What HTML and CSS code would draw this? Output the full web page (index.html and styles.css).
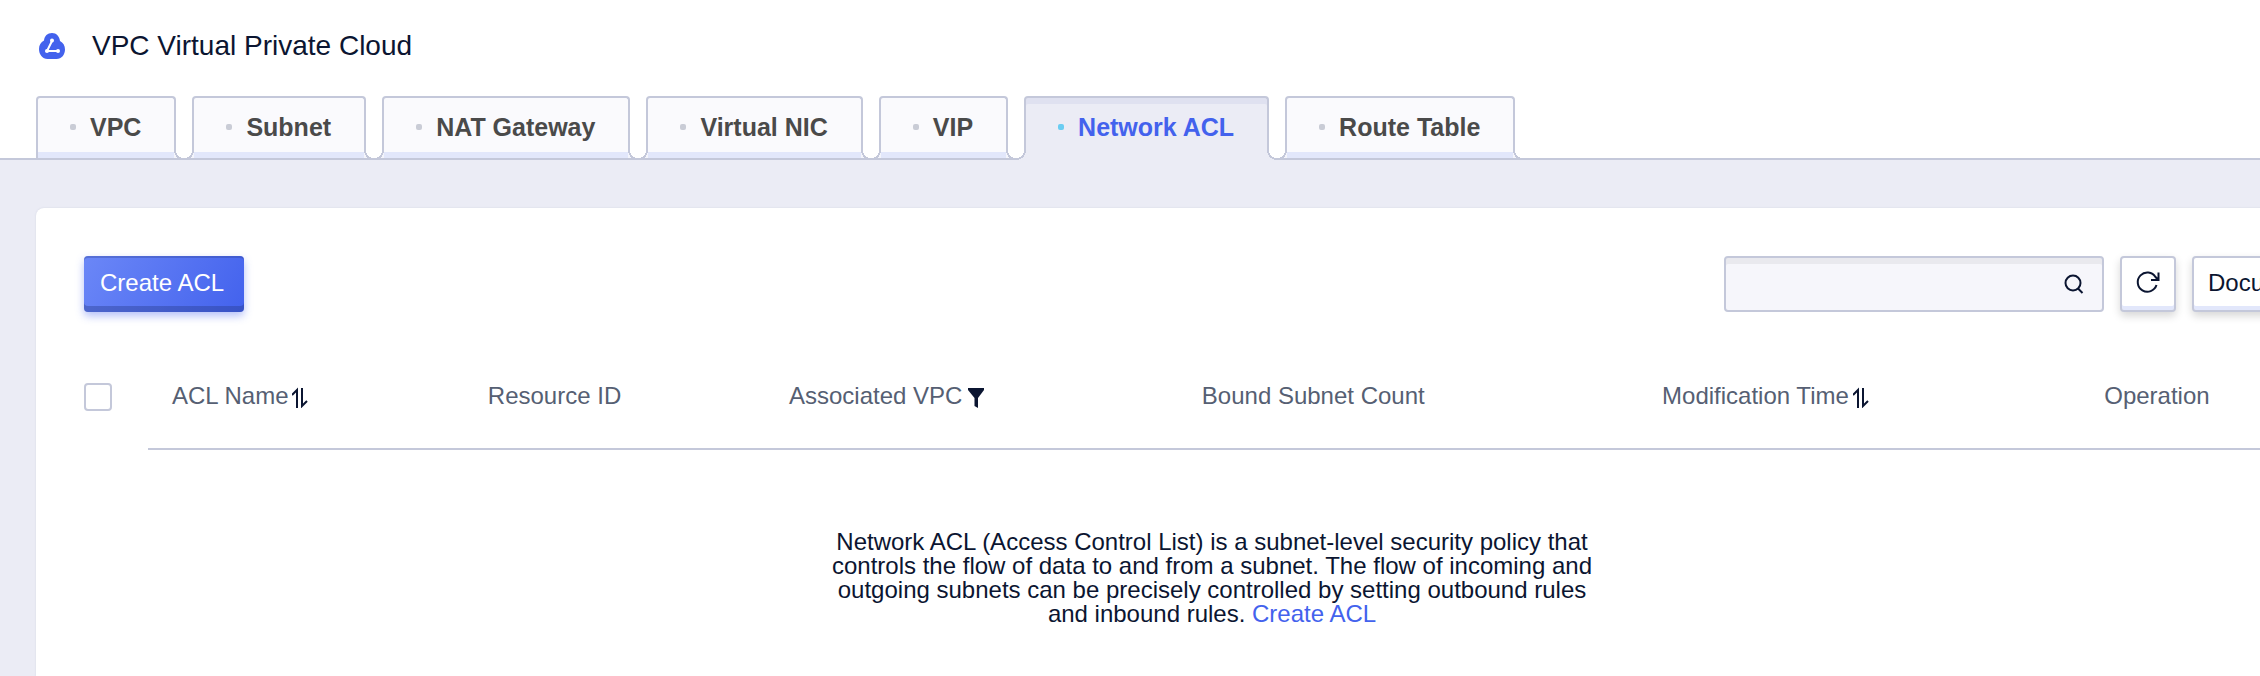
FILE: index.html
```
<!DOCTYPE html>
<html lang="en">
<head>
	<meta charset="utf-8">
	<title>VPC Virtual Private Cloud</title>
	<link rel="stylesheet" href="styles.css">
</head>
<body>

	<header class="header">
		<div class="title">
			<svg class="logo" viewBox="0 0 28 28" aria-hidden="true">
				<path d="M14 1C9.500 1 6.300 4 6 8.500C2.800 10.300 1 13.300 1 17C1 22.500 4.500 27 9.500 27H18.500C23.700 27 27 22.500 27 17.500C27 13.500 25 10.600 22 9C21.400 4.300 18.500 1 14 1Z" fill="#4362ed"/>
				<path d="M14 9L9 19H20" fill="none" stroke="#fff" stroke-width="2"/>
				<circle cx="14" cy="8.500" r="2" fill="#fff"/>
				<circle cx="9" cy="19" r="2" fill="#fff"/>
				<circle cx="20" cy="19" r="2" fill="#fff"/>
			</svg>
			<h1>VPC Virtual Private Cloud</h1>
		</div>
		<nav class="tabs">
			<a class="tab" href="#vpc"><span class="dot"></span>VPC</a>
			<a class="tab" href="#subnet"><span class="dot"></span>Subnet</a>
			<a class="tab" href="#nat"><span class="dot"></span>NAT Gateway</a>
			<a class="tab" href="#nic"><span class="dot"></span>Virtual NIC</a>
			<a class="tab" href="#vip"><span class="dot"></span>VIP</a>
			<a class="tab active" href="#acl"><span class="dot"></span>Network ACL</a>
			<a class="tab" href="#route"><span class="dot"></span>Route Table</a>
		</nav>
	</header>

	<main class="panel">
		<div class="toolbar">
			<button class="btn primary">Create ACL</button>
			<div class="search">
				<input type="text" aria-label="Search">
				<svg viewBox="0 0 20 20" aria-hidden="true">
					<circle cx="9" cy="9" r="7.500"/>
					<path d="M14 14.500L18.500 19"/>
				</svg>
			</div>
			<button class="btn icon" aria-label="Refresh">
				<svg viewBox="0 0 24 24" aria-hidden="true">
					<path d="M20.500 15A9.600 9.600 0 1 1 19.500 7L22 9.500M22.500 2.500V10H15"/>
				</svg>
			</button>
			<button class="btn">Document</button>
		</div>

		<table class="list">
			<colgroup>
				<col class="col-check">
				<col class="col-name">
				<col class="col-id">
				<col class="col-vpc">
				<col class="col-count">
				<col class="col-time">
				<col>
			</colgroup>
			<thead>
				<tr>
					<th class="check"><input type="checkbox" aria-label="Select all"></th>
					<th>
						<span class="label">ACL Name
							<svg class="sort" viewBox="0 -4 16 24" aria-hidden="true"><path d="M0 7L5 2V20M10 0V18L15 13"/></svg>
						</span>
					</th>
					<th>Resource ID</th>
					<th>
						<span class="label">Associated VPC
							<svg class="filter" viewBox="-2 -4 18 24" aria-hidden="true"><path d="M0 0H16V2L10 10V20L6.500 18V10L0 2Z"/></svg>
						</span>
					</th>
					<th>Bound Subnet Count</th>
					<th>
						<span class="label">Modification Time
							<svg class="sort" viewBox="0 -4 16 24" aria-hidden="true"><path d="M0 7L5 2V20M10 0V18L15 13"/></svg>
						</span>
					</th>
					<th>Operation</th>
				</tr>
			</thead>
			<tbody>
				<tr>
					<td colspan="7">
						<p class="empty">Network ACL (Access Control List) is a subnet-level security policy that controls the flow of data to and from a subnet. The flow of incoming and outgoing subnets can be precisely controlled by setting outbound rules and inbound rules. <a href="#create">Create ACL</a></p>
					</td>
				</tr>
			</tbody>
		</table>
	</main>

</body>
</html>
```

FILE: styles.css
```
* {
	box-sizing: border-box;
}

body {
	margin: 0;
	min-height: 100vh;
	display: flex;
	flex-direction: column;
	overflow: hidden;
	background-color: #ebecf5;
	color: #0b1531;
	font-family: "Liberation Sans", Arial, sans-serif;
	font-size: 24px;
}

.header {
	background-color: white;
	border-bottom: 2px solid #c4c8da;
	padding: 28px 36px 0;
}

.title {
	display: flex;
	align-items: center;
	gap: 26px;
	padding: 0 2px;
	height: 36px;
}

.title h1 {
	margin: 0;
	font-size: 28px;
	font-weight: normal;
}

.logo {
	width: 28px;
	height: 28px;
}

.tabs {
	display: flex;
	gap: 16px;
	margin-top: 32px;
}

.tab {
	position: relative;
	display: flex;
	align-items: center;
	height: 62px;
	padding: 0 33px 2px 32px;
	border: 2px solid #c4c8da;
	border-bottom: none;
	border-radius: 4px 4px 0 0;
	background-color: #fafafd;
	box-shadow: inset 0 -6px #e2e7fb;
	color: #4a4a4a;
	font-size: 25px;
	font-weight: bold;
	text-decoration: none;
	white-space: nowrap;
}

.dot {
	width: 6px;
	height: 6px;
	margin-right: 14px;
	border-radius: 2px;
	background-color: #c9ccd6;
}

/* rounded feet that run the tab's sides into the header line */
.tab::before,
.tab::after {
	content: "";
	position: absolute;
	bottom: -2px;
	width: 10px;
	height: 10px;
}

.tab::before {
	right: 100%;
	background:
		linear-gradient(#c4c8da, #c4c8da) bottom / 100% 2px no-repeat,
		radial-gradient(circle at top left, white 8px, #c4c8da 8px, #c4c8da 10px, #f4f5fc 10px);
}

.tab::after {
	left: 100%;
	background:
		linear-gradient(#c4c8da, #c4c8da) bottom / 100% 2px no-repeat,
		radial-gradient(circle at top right, white 8px, #c4c8da 8px, #c4c8da 10px, #f4f5fc 10px);
}

.tab:first-child::before {
	display: none;
}

.tab.active {
	height: 64px;
	margin-bottom: -2px;
	padding-bottom: 4px;
	background-color: #ebecf5;
	box-shadow: inset 0 6px #dfe1f0;
	color: #4362ed;
}

.tab.active .dot {
	background-color: #6acdf2;
}

.tab.active::before,
.tab.active::after {
	bottom: 0;
}

.tab.active::before {
	background: radial-gradient(circle at top left, white 8px, #c4c8da 8px, #c4c8da 10px, #ebecf5 10px);
}

.tab.active::after {
	background: radial-gradient(circle at top right, white 8px, #c4c8da 8px, #c4c8da 10px, #ebecf5 10px);
}

/* the list is wider than the window and runs off its right side */
.panel {
	flex: 1;
	margin: 48px -128px 0 36px;
	padding: 48px;
	border-radius: 8px 8px 0 0;
	background-color: white;
	box-shadow: 0 0 2px #d0d3e0;
}

.toolbar {
	display: flex;
	gap: 16px;
}

.btn {
	min-width: 148px;
	height: 56px;
	padding: 0 14px 2px;
	border: 2px solid #c4c8da;
	border-radius: 4px;
	background-color: white;
	box-shadow: inset 0 -4px #e2e7fb, 0 4px 8px rgba(0, 0, 0, 0.16);
	color: #0b1531;
	font: inherit;
	text-align: left;
}

.btn.primary {
	min-width: 160px;
	margin-right: auto;
	padding: 0 16px 2px;
	border: none;
	background: linear-gradient(120deg, #6b87f7, #4362ed);
	box-shadow: inset 0 2px rgba(40, 60, 140, 0.3), inset 0 -6px rgba(40, 60, 140, 0.4), 0 4px 8px rgba(67, 98, 237, 0.4);
	color: white;
}

.btn.icon {
	display: flex;
	align-items: center;
	justify-content: center;
	min-width: 56px;
	padding: 0 0 4px;
}

.btn svg,
.search svg {
	fill: none;
	stroke: #0b1531;
	stroke-width: 2;
}

.btn svg {
	width: 24px;
	height: 24px;
}

.search {
	display: flex;
	align-items: center;
	width: 380px;
	height: 56px;
	padding: 0 18px;
	border: 2px solid #c4c8da;
	border-radius: 4px;
	background-color: #f6f6fb;
	box-shadow: inset 0 6px #e9e9ee;
}

.search input {
	flex: 1;
	min-width: 0;
	border: none;
	outline: none;
	background: none;
	font: inherit;
}

.search svg {
	width: 20px;
	height: 20px;
}

.list {
	width: 100%;
	margin-top: 32px;
	table-layout: fixed;
	border-collapse: separate;
	border-spacing: 0;
}

.col-check { width: 64px; }
.col-name { width: 14%; }
.col-id { width: 13.35%; }
.col-vpc { width: 18.3%; }
.col-count { width: 20.4%; }
.col-time { width: 19.6%; }

th {
	height: 106px;
	padding: 0 0 0 24px;
	border-bottom: 2px solid #c4c8da;
	color: #565f73;
	font-weight: normal;
	text-align: left;
	white-space: nowrap;
}

th.check {
	padding: 0;
	border-bottom: none;
}

.check input {
	appearance: none;
	display: block;
	width: 28px;
	height: 28px;
	margin: 0;
	border: 2px solid #c4c8da;
	border-radius: 4px;
	background-color: white;
}

.label {
	display: flex;
	align-items: center;
	gap: 4px;
}

.sort {
	width: 16px;
	height: 24px;
	fill: none;
	stroke: #0b1531;
	stroke-width: 2;
}

.filter {
	width: 18px;
	height: 24px;
	fill: #0b1531;
}

td {
	padding: 80px 0 0;
}

.empty {
	max-width: 784px;
	margin: 0 auto;
	line-height: 24px;
	text-align: center;
}

.empty a {
	color: #4362ed;
	text-decoration: none;
}
```
